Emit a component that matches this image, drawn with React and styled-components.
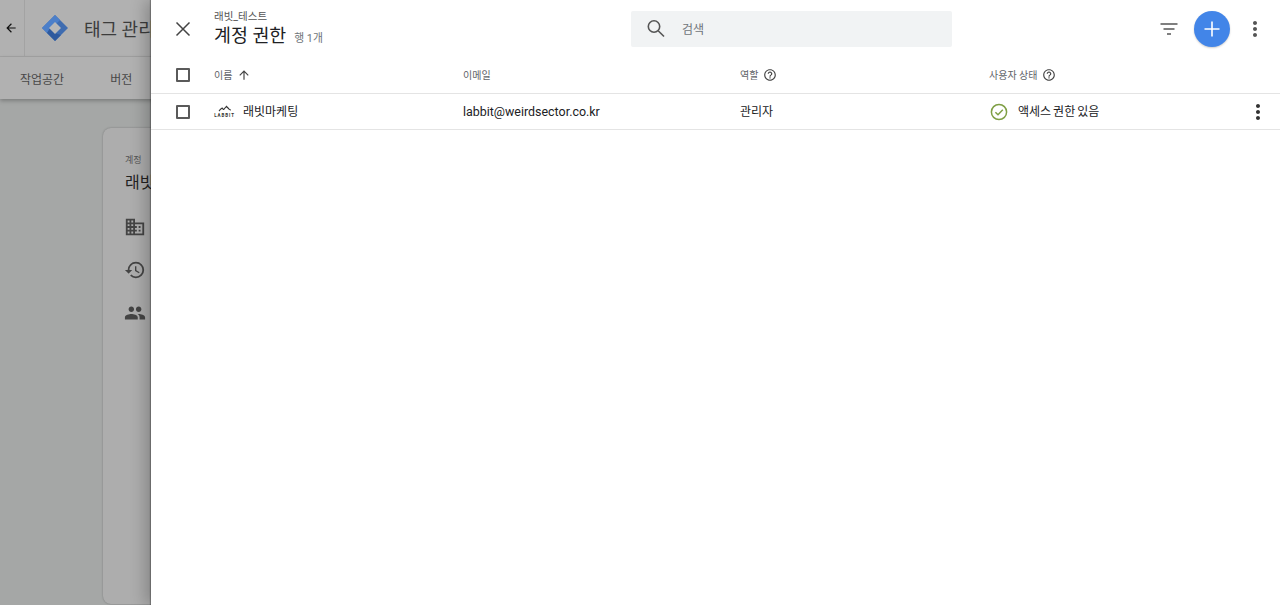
import React from "react"
import styled, { createGlobalStyle } from "styled-components"

const GlobalStyle = createGlobalStyle`
  html, body { margin: 0; padding: 0; height: 100%; overflow: hidden; }
  body { font-family: Roboto, "Noto Sans CJK KR", sans-serif; background: #fff; }
`

const HelpIcon = () => (
  <svg width="14" height="14" viewBox="0 0 24 24" fill="#444">
    <path d="M11 18h2v-2h-2v2zm1-16C6.48 2 2 6.48 2 12s4.48 10 10 10 10-4.48 10-10S17.52 2 12 2zm0 18c-4.41 0-8-3.59-8-8s3.59-8 8-8 8 3.59 8 8-3.59 8-8 8zm0-14c-2.21 0-4 1.79-4 4h2c0-1.1.9-2 2-2s2 .9 2 2c0 2-3 1.75-3 5h2c0-2.25 3-2.5 3-5 0-2.21-1.79-4-4-4z" />
  </svg>
)

const DotsIcon = ({ color }) => (
  <svg width="24" height="24" viewBox="0 0 24 24" fill={color}>
    <path d="M12 8c1.1 0 2-.9 2-2s-.9-2-2-2-2 .9-2 2 .9 2 2 2zm0 2c-1.1 0-2 .9-2 2s.9 2 2 2 2-.9 2-2-.9-2-2-2zm0 6c-1.1 0-2 .9-2 2s.9 2 2 2 2-.9 2-2-.9-2-2-2z" />
  </svg>
)

const App = () => (
  <Page>
    <GlobalStyle />

    <Backdrop>
      <AppBar>
        <BackCell>
          <svg width="14" height="14" viewBox="0 0 24 24" fill="#111">
            <path d="M20 11H7.83l5.59-5.59L12 4l-8 8 8 8 1.41-1.41L7.83 13H20v-2z" />
          </svg>
        </BackCell>
        <svg width="28" height="28" viewBox="0 0 28 28">
          <path d="M14 1 L27 14 L14 27 L1 14 Z" fill="#3f6cb0" />
          <path d="M14 1 L19 6 L6 19 L1 14 Z" fill="#4c7fc9" />
          <path d="M6 19 L14 27 L20 21 L14 19 L9 14 Z" fill="#2f5a9e" />
          <path d="M14 8 L20 14 L14 20 L8 14 Z" fill="#b8b8b8" />
        </svg>
        <AppTitle>태그 관리자</AppTitle>
      </AppBar>
      <TabBar>
        <Tab>작업공간</Tab>
        <Tab>버전</Tab>
      </TabBar>
      <Content>
        <Card>
          <CardLabel>계정</CardLabel>
          <CardName>래빗마케팅</CardName>
          <CardIcon>
            <svg width="22" height="22" viewBox="0 0 24 24" fill="#444">
              <path d="M12 7V3H2v18h20V7H12zM6 19H4v-2h2v2zm0-4H4v-2h2v2zm0-4H4V9h2v2zm0-4H4V5h2v2zm4 12H8v-2h2v2zm0-4H8v-2h2v2zm0-4H8V9h2v2zm0-4H8V5h2v2zm10 12h-8v-2h2v-2h-2v-2h2v-2h-2V9h8v10zm-2-8h-2v2h2v-2zm0 4h-2v2h2v-2z" />
            </svg>
          </CardIcon>
          <CardIcon>
            <svg width="22" height="22" viewBox="0 0 24 24" fill="#444">
              <path d="M13 3a9 9 0 0 0-9 9H1l3.89 3.89.07.14L9 12H6c0-3.87 3.13-7 7-7s7 3.13 7 7-3.13 7-7 7c-1.93 0-3.68-.79-4.94-2.06l-1.42 1.42A8.954 8.954 0 0 0 13 21a9 9 0 0 0 0-18zm-1 5v5l4.28 2.54.72-1.21-3.5-2.08V8H12z" />
            </svg>
          </CardIcon>
          <CardIcon>
            <svg width="22" height="22" viewBox="0 0 24 24" fill="#444">
              <path d="M16 11c1.66 0 2.99-1.34 2.99-3S17.66 5 16 5c-1.66 0-3 1.34-3 3s1.34 3 3 3zm-8 0c1.66 0 2.99-1.34 2.99-3S9.66 5 8 5C6.34 5 5 6.34 5 8s1.34 3 3 3zm0 2c-2.33 0-7 1.17-7 3.5V19h14v-2.5c0-2.33-4.67-3.5-7-3.5zm8 0c-.29 0-.62.02-.97.05 1.16.84 1.97 1.97 1.97 3.45V19h6v-2.5c0-2.33-4.67-3.5-7-3.5z" />
            </svg>
          </CardIcon>
        </Card>
      </Content>
    </Backdrop>

    <Drawer>
      <DrawerHeader>
        <CloseButton>
          <svg width="24" height="24" viewBox="0 0 24 24" fill="none" stroke="#444" strokeWidth="1.5">
            <path d="M5.5 5.5 L18.5 18.5 M18.5 5.5 L5.5 18.5" />
          </svg>
        </CloseButton>
        <TitleBlock>
          <Breadcrumb>래빗_테스트</Breadcrumb>
          <TitleLine>
            <Title>계정 권한</Title>
            <RowCount>행 1개</RowCount>
          </TitleLine>
        </TitleBlock>
        <SearchBox>
          <svg width="24" height="24" viewBox="0 0 24 24" fill="none" stroke="#555" strokeWidth="1.6">
            <circle cx="10" cy="9.5" r="5.7" />
            <path d="M14.2 13.7 L20 19.5" />
          </svg>
          <SearchText>검색</SearchText>
        </SearchBox>
        <Actions>
          <svg width="24" height="24" viewBox="0 0 24 24" fill="none" stroke="#555" strokeWidth="1.4">
            <path d="M3.5 7 H20.5 M6.5 12 H17.5 M10 17 H14" />
          </svg>
          <AddButton>
            <svg width="24" height="24" viewBox="0 0 24 24" fill="none" stroke="#fff" strokeWidth="1.6">
              <path d="M12 4.5 V19.5 M4.5 12 H19.5" />
            </svg>
          </AddButton>
          <DotsIcon color="#555" />
        </Actions>
      </DrawerHeader>

      <HeadRow>
        <CheckCell><Checkbox /></CheckCell>
        <HeadCell>
          이름
          <svg width="14" height="14" viewBox="0 0 24 24" fill="#444">
            <path d="M4 12l1.41 1.41L11 7.83V20h2V7.83l5.58 5.59L20 12l-8-8-8 8z" />
          </svg>
        </HeadCell>
        <HeadCell>이메일</HeadCell>
        <HeadCell>역할 <HelpIcon /></HeadCell>
        <HeadCell>사용자 상태 <HelpIcon /></HeadCell>
        <span />
      </HeadRow>

      <BodyRow>
        <CheckCell><Checkbox /></CheckCell>
        <IconCell>
          <Logo>
            <svg width="14" height="7" viewBox="0 0 14 7" fill="none" stroke="#333" strokeWidth="1.1">
              <path d="M1 6 C3 4 4 2 5 4 C6 6 7 1 9 2 C11 3 10 5 13 5 M8 1 L11 4" />
            </svg>
            <LogoText>LABBIT</LogoText>
          </Logo>
          <CellText>래빗마케팅</CellText>
        </IconCell>
        <EmailCell>labbit@weirdsector.co.kr</EmailCell>
        <CellText>관리자</CellText>
        <StatusCell>
          <svg width="20" height="20" viewBox="0 0 20 20" fill="none" stroke="#7f9f45" strokeWidth="1.5">
            <circle cx="10" cy="10" r="7.6" />
            <path d="M6.4 10.2 L9 12.8 L13.8 7.8" />
          </svg>
          <CellText>액세스 권한 있음</CellText>
        </StatusCell>
        <MoreCell><DotsIcon color="#333" /></MoreCell>
      </BodyRow>
    </Drawer>
  </Page>
)

const Page = styled.div`
  position: relative;
  width: 1280px;
  height: 605px;
  overflow: hidden;
  background: #a5a7a6;
`

const Backdrop = styled.div`
  display: flex;
  flex-direction: column;
  height: 100%;
`

const AppBar = styled.div`
  display: flex;
  align-items: center;
  height: 56px;
  background: #b1b1b1;
  border-bottom: 1px solid #a3a3a3;
  flex-shrink: 0;
`

const BackCell = styled.div`
  display: flex;
  align-items: center;
  justify-content: center;
  width: 22px;
  height: 56px;
  padding-right: 2px;
  margin-right: 16px;
  border-right: 1px solid #a3a3a3;
`

const AppTitle = styled.div`
  margin-left: 15px;
  font-size: 18px;
  color: #3c3c3c;
  white-space: nowrap;
`

const TabBar = styled.div`
  display: flex;
  align-items: center;
  gap: 46px;
  height: 42px;
  padding-left: 20px;
  background: #b1b1b1;
  box-shadow: 0 2px 4px rgba(0, 0, 0, 0.25);
  flex-shrink: 0;
`

const Tab = styled.div`
  font-size: 12px;
  color: #484848;
`

const Content = styled.div`
  flex: 1;
  padding: 29px 0 1px 103px;
  display: flex;
  min-height: 0;
`

const Card = styled.div`
  width: 200px;
  padding: 26px 0 0 22px;
  box-sizing: border-box;
  background: #adadad;
  border-radius: 8px;
  box-shadow: 0 0 2px rgba(0, 0, 0, 0.3);
`

const CardLabel = styled.div`
  font-size: 9px;
  line-height: 12px;
  color: #555;
`

const CardName = styled.div`
  margin-top: 5px;
  margin-bottom: 21px;
  font-size: 16px;
  line-height: 24px;
  color: #222;
  white-space: nowrap;
`

const CardIcon = styled.div`
  display: flex;
  height: 22px;
  margin-bottom: 21px;
  margin-left: -1px;
`

const Drawer = styled.div`
  position: absolute;
  top: 0;
  left: 151px;
  right: 0;
  bottom: 0;
  background: #fff;
  box-shadow: -1px 0 1px rgba(0, 0, 0, 0.25), -6px 0 14px rgba(0, 0, 0, 0.22);
`

const DrawerHeader = styled.div`
  display: flex;
  align-items: center;
  height: 56px;
`

const CloseButton = styled.div`
  display: flex;
  justify-content: center;
  width: 63px;
  margin-top: 2px;
  flex-shrink: 0;
`

const TitleBlock = styled.div`
  width: 417px;
  flex-shrink: 0;
`

const Breadcrumb = styled.div`
  font-size: 10.5px;
  line-height: 14px;
  margin-top: 2px;
  color: #555;
`

const TitleLine = styled.div`
  display: flex;
  align-items: baseline;
  gap: 8px;
`

const Title = styled.div`
  font-size: 18.4px;
  line-height: 24px;
  color: #202124;
`

const RowCount = styled.div`
  font-size: 10.8px;
  color: #70757a;
`

const SearchBox = styled.div`
  display: flex;
  align-items: center;
  gap: 14px;
  box-sizing: border-box;
  width: 321px;
  height: 36px;
  margin-top: 1px;
  padding-left: 13px;
  background: #f1f3f4;
  border-radius: 2px;
  flex-shrink: 0;
`

const SearchText = styled.div`
  font-size: 12px;
  color: #70757a;
`

const Actions = styled.div`
  display: flex;
  align-items: center;
  margin-left: auto;
  margin-top: 2px;
  padding-right: 13px;
  gap: 13px;
`

const AddButton = styled.div`
  display: flex;
  align-items: center;
  justify-content: center;
  width: 36px;
  height: 36px;
  border-radius: 50%;
  background: #4285e8;
  box-shadow: 0 1px 2px rgba(0, 0, 0, 0.2);
`

const columns = "63px 249px 277px 249px 1fr 44px"

const HeadRow = styled.div`
  display: grid;
  grid-template-columns: ${columns};
  align-items: center;
  height: 37px;
  border-bottom: 1px solid #e4e4e4;
`

const BodyRow = styled.div`
  display: grid;
  grid-template-columns: ${columns};
  align-items: center;
  height: 35px;
  border-bottom: 1px solid #e4e4e4;
`

const CheckCell = styled.div`
  display: flex;
  justify-content: center;
`

const Checkbox = styled.div`
  box-sizing: border-box;
  width: 14px;
  height: 14px;
  border: 2px solid #5a5a5a;
  border-radius: 1px;
`

const HeadCell = styled.div`
  display: flex;
  align-items: center;
  gap: 5px;
  font-size: 10px;
  color: #5f6368;
`

const CellText = styled.div`
  padding-top: 1px;
  font-size: 12px;
  line-height: 15px;
  color: #202124;
`

const EmailCell = styled.div`
  font-size: 12.45px;
  line-height: 15px;
  color: #202124;
`

const IconCell = styled.div`
  display: flex;
  align-items: center;
  gap: 8px;
`

const Logo = styled.div`
  display: flex;
  flex-direction: column;
  align-items: center;
  gap: 1px;
  width: 21px;
`

const LogoText = styled.div`
  font-size: 4.5px;
  line-height: 5px;
  font-weight: 700;
  letter-spacing: 0.9px;
  color: #333;
`

const StatusCell = styled.div`
  display: flex;
  align-items: center;
  gap: 9px;
  word-spacing: -1px;
`

const MoreCell = styled.div`
  display: flex;
  justify-content: center;
`

export default App
